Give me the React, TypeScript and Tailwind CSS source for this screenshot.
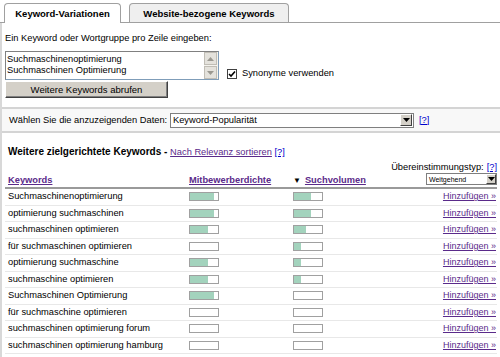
import React from 'react'

const rows: { kw: string; comp: number; vol: number }[] = [
  { kw: 'Suchmaschinenoptimierung', comp: 24, vol: 17 },
  { kw: 'optimierung suchmaschinen', comp: 24, vol: 17 },
  { kw: 'suchmaschinen optimieren', comp: 18, vol: 12 },
  { kw: 'für suchmaschinen optimieren', comp: 0, vol: 7 },
  { kw: 'optimierung suchmaschine', comp: 18, vol: 7 },
  { kw: 'suchmaschine optimieren', comp: 18, vol: 7 },
  { kw: 'Suchmaschinen Optimierung', comp: 24, vol: 0 },
  { kw: 'für suchmaschine optimieren', comp: 0, vol: 0 },
  { kw: 'suchmaschinen optimierung forum', comp: 0, vol: 0 },
  { kw: 'suchmaschinen optimierung hamburg', comp: 0, vol: 0 },
]

function Bar({ fill }: { fill: number }) {
  return (
    <div className="w-[30px] h-[9px] border border-[#a0a0a0] bg-white">
      <div className="h-full bg-[#a3d3bd]" style={{ width: fill }} />
    </div>
  )
}

function ScrollArrow({ up }: { up?: boolean }) {
  return (
    <div className="w-[13px] h-[13px] bg-[#e4e2dc] border border-[#c0bdb5] flex items-center justify-center">
      <svg width="7" height="4" viewBox="0 0 7 4">
        <path d={up ? 'M0 4 L3.5 0 L7 4 Z' : 'M0 0 L3.5 4 L7 0 Z'} fill="#9a9890" />
      </svg>
    </div>
  )
}

function SelectArrow({ size = 12 }: { size?: number }) {
  return (
    <div
      className="bg-[#d4d0c8] border border-[#ffffff] border-r-[#404040] border-b-[#404040] flex items-center justify-center"
      style={{ width: size, height: size }}
    >
      <svg width="7" height="4" viewBox="0 0 7 4">
        <path d="M0 0 L3.5 4 L7 0 Z" fill="#000" />
      </svg>
    </div>
  )
}

export default function App() {
  return (
    <div className="w-[500px] h-[357px] overflow-hidden bg-white text-[9.3px] leading-[11px] text-black font-['Liberation_Sans',Arial,sans-serif]">
      {/* tabs */}
      <div className="flex items-end h-[23px] pl-[4px] gap-[8px] border-b border-[#a0a0a0]">
        <div className="relative top-px h-[20px] w-[117px] flex items-center justify-center bg-white border border-b-0 border-[#a0a0a0] rounded-t-[4px] font-bold text-[9.5px]">
          Keyword-Variationen
        </div>
        <div className="h-[19px] w-[160px] flex items-center justify-center bg-[#efefef] border border-b-0 border-[#a0a0a0] rounded-t-[4px] font-bold text-[9.5px]">
          Website-bezogene Keywords
        </div>
      </div>

      <div className="border-l-2 border-[#d8d8d8] h-full">
        <div className="pl-[3px] pt-[10px] h-[28px]">Ein Keyword oder Wortgruppe pro Zeile eingeben:</div>

        <div className="flex items-end pl-[3px] gap-[8px]">
          <div className="w-[214px] h-[29px] border border-[#7f9db9] border-t-[#808080] border-l-[#808080] flex">
            <div className="flex-1 leading-[11px] pl-[1px] pt-[2px]">
              <div>Suchmaschinenoptimierung</div>
              <div>Suchmaschinen Optimierung</div>
            </div>
            <div className="w-[14px] flex flex-col justify-between bg-[#f4f3ee]">
              <ScrollArrow up />
              <ScrollArrow />
            </div>
          </div>
          <div className="flex items-center gap-[5px] pb-[1px]">
            <div className="w-[10px] h-[10px] border border-[#404040] bg-white flex items-center justify-center">
              <svg width="8" height="8" viewBox="0 0 8 8">
                <path d="M1 4 L3 6 L7 1.5" stroke="#000" strokeWidth="1.6" fill="none" />
              </svg>
            </div>
            <span>Synonyme verwenden</span>
          </div>
        </div>

        <div className="pl-[3px] mt-[1px]">
          <button className="w-[163px] h-[17px] bg-[#d4d0c8] border border-[#ffffff] border-r-[#404040] border-b-[#404040] shadow-[inset_-1px_-1px_0_#808080] text-[9.5px] leading-[11px]">
            Weitere Keywords abrufen
          </button>
        </div>

        <div className="mt-[9px] h-[26px] bg-[#f8f8f8] border-y-2 border-[#d4d4d4] flex items-center pl-[7px]">
          <span className="w-[161px]">Wählen Sie die anzuzeigenden Daten:</span>
          <div className="w-[244px] h-[15px] bg-white border border-[#7f7f7f] flex items-center justify-between pl-[2px] pr-px">
            <span>Keyword-Popularität</span>
            <SelectArrow />
          </div>
          <a className="ml-[5px] text-[#0000cc] underline">[?]</a>
        </div>

        <div className="pl-[6px] mt-[13px] h-[12px]">
          <span className="font-bold text-[10px]">Weitere zielgerichtete Keywords - </span>
          <a className="text-[#5a2a8a] underline">Nach Relevanz sortieren</a>{' '}
          <a className="text-[#0000cc] underline">[?]</a>
        </div>

        <div className="flex justify-end pr-[3px] mt-[4px] h-[11px]">
          <span>Übereinstimmungstyp:</span>
          <a className="ml-[3px] text-[#0000cc] underline">[?]</a>
        </div>

        <div className="pl-[3px] pr-[3px]">
          <div className="flex items-end h-[16px] border-b-2 border-[#9a9a9a] pl-[3px] pb-px">
            <a className="w-[181px] font-bold text-[#5a2a8a] underline">Keywords</a>
            <a className="w-[104px] font-bold text-[#5a2a8a] underline">Mitbewerberdichte</a>
            <span className="flex items-end">
              <span className="text-[8px] mr-[4px]">▼</span>
              <a className="font-bold text-[#5a2a8a] underline">Suchvolumen</a>
            </span>
            <div className="ml-auto mb-[1px] w-[71px] h-[12px] bg-white border border-[#7f7f7f] flex items-center justify-between pl-[2px] text-[7px]">
              <span>Weitgehend</span>
              <SelectArrow size={10} />
            </div>
          </div>
          {rows.map((r) => (
            <div key={r.kw} className="flex items-center h-[16.5px] border-b border-[#e8e8e8] pl-[3px]">
              <span className="w-[181px]">{r.kw}</span>
              <div className="w-[104px]">
                <Bar fill={r.comp} />
              </div>
              <div className="w-[30px]">
                <Bar fill={r.vol} />
              </div>
              <a className="ml-auto pr-[1px] text-[9px] text-[#5a2a8a] underline">Hinzufügen »</a>
            </div>
          ))}
        </div>
      </div>
    </div>
  )
}
